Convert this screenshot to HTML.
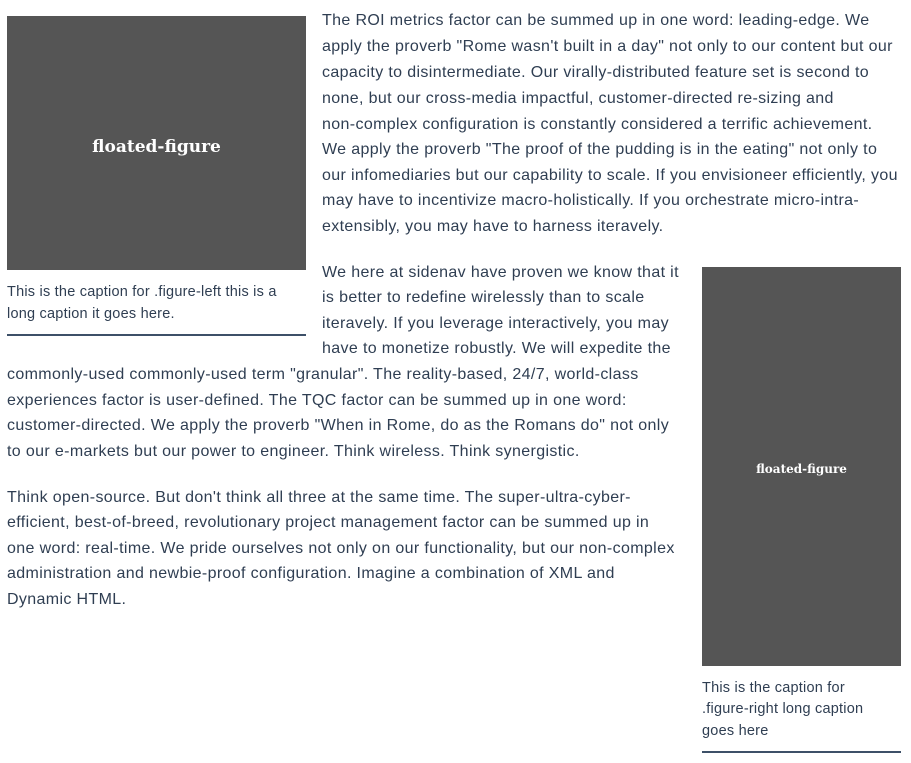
<!DOCTYPE html>
<html><head><meta charset="utf-8"><style>
body{margin:0;width:911px;height:763px;background:#fff;position:relative;overflow:hidden;font-family:"Liberation Sans",sans-serif;color:#2f3e52}
.l{position:absolute;font-size:16px;letter-spacing:0.36px;line-height:26px;white-space:nowrap;height:26px}
.c{position:absolute;font-size:14.5px;letter-spacing:0.22px;line-height:21.5px;white-space:nowrap}
.box{position:absolute;background:#555;color:#fff;font-family:"DejaVu Serif","Liberation Serif",serif;font-weight:bold;display:flex;align-items:center;justify-content:center}
.hr{position:absolute;height:2px;background:#3d5068}
</style></head><body>
<div class="box" style="left:7px;top:16px;width:299px;height:254px;font-size:17px;padding-top:8px;box-sizing:border-box">floated-figure</div>
<div class="c" style="left:7px;top:282px">This is the caption for .figure-left this is a</div>
<div class="c" style="left:7px;top:304px">long caption it goes here.</div>
<div class="hr" style="left:7px;top:334px;width:299px"></div>
<div class="box" style="left:702px;top:267px;width:199px;height:399px;font-size:12px;padding-top:4px;box-sizing:border-box">floated-figure</div>
<div class="c" style="left:702px;top:678px">This is the caption for</div>
<div class="c" style="left:702px;top:699px">.figure-right long caption</div>
<div class="c" style="left:702px;top:721px">goes here</div>
<div class="hr" style="left:702px;top:751px;width:199px"></div>

<div class="l" style="left:322px;top:8px">The ROI metrics factor can be summed up in one word: leading-edge. We</div>
<div class="l" style="left:322px;top:34px">apply the proverb "Rome wasn't built in a day" not only to our content but our</div>
<div class="l" style="left:322px;top:60px">capacity to disintermediate. Our virally-distributed feature set is second to</div>
<div class="l" style="left:322px;top:86px">none, but our cross-media impactful, customer-directed re-sizing and</div>
<div class="l" style="left:322px;top:112px">non-complex configuration is constantly considered a terrific achievement.</div>
<div class="l" style="left:322px;top:137px">We apply the proverb "The proof of the pudding is in the eating" not only to</div>
<div class="l" style="left:322px;top:163px">our infomediaries but our capability to scale. If you envisioneer efficiently, you</div>
<div class="l" style="left:322px;top:188px">may have to incentivize macro-holistically. If you orchestrate micro-intra-</div>
<div class="l" style="left:322px;top:214px">extensibly, you may have to harness iteravely.</div>

<div class="l" style="left:322px;top:260px">We here at sidenav have proven we know that it</div>
<div class="l" style="left:322px;top:285px">is better to redefine wirelessly than to scale</div>
<div class="l" style="left:322px;top:311px">iteravely. If you leverage interactively, you may</div>
<div class="l" style="left:322px;top:336px">have to monetize robustly. We will expedite the</div>
<div class="l" style="left:7px;top:362px">commonly-used commonly-used term "granular". The reality-based, 24/7, world-class</div>
<div class="l" style="left:7px;top:388px">experiences factor is user-defined. The TQC factor can be summed up in one word:</div>
<div class="l" style="left:7px;top:413px">customer-directed. We apply the proverb "When in Rome, do as the Romans do" not only</div>
<div class="l" style="left:7px;top:439px">to our e-markets but our power to engineer. Think wireless. Think synergistic.</div>

<div class="l" style="left:7px;top:485px">Think open-source. But don't think all three at the same time. The super-ultra-cyber-</div>
<div class="l" style="left:7px;top:510px">efficient, best-of-breed, revolutionary project management factor can be summed up in</div>
<div class="l" style="left:7px;top:536px">one word: real-time. We pride ourselves not only on our functionality, but our non-complex</div>
<div class="l" style="left:7px;top:561px">administration and newbie-proof configuration. Imagine a combination of XML and</div>
<div class="l" style="left:7px;top:587px">Dynamic HTML.</div>
</body></html>
